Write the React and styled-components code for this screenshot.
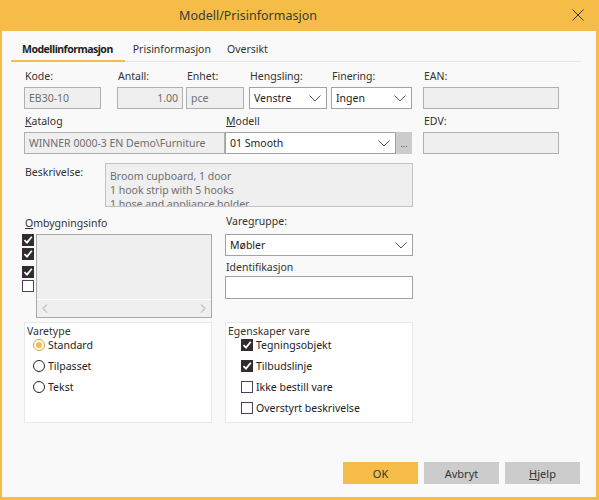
import React from 'react';
import styled, { createGlobalStyle } from 'styled-components';

const orange = '#f5bd48';

const GlobalStyle = createGlobalStyle`
  html, body {
    margin: 0;
    padding: 0;
  }
  body {
    font-family: 'Noto Sans', sans-serif;
    font-size: 10.5px;
    color: #333;
    background: #fff;
  }
  * {
    box-sizing: border-box;
  }
`;

const Window = styled.div`
  width: 599px;
  height: 500px;
  display: flex;
  flex-direction: column;
  border: 2px solid ${orange};
  border-top: 0;
  border-right-width: 3px;
  border-bottom-width: 3px;
  background: #f9f9f9;
`;

const TitleBar = styled.div`
  height: 31px;
  flex: none;
  display: flex;
  align-items: center;
  background: ${orange};
`;

const Title = styled.div`
  flex: 1;
  text-align: center;
  padding-right: 78px;
  font-size: 12.5px;
  color: #3a3a3a;
`;

const CloseButton = styled.div`
  width: 12px;
  height: 12px;
  margin: -2px 12px 0 0;
  display: flex;
`;

const Body = styled.div`
  flex: 1;
  display: flex;
  flex-direction: column;
  padding: 8px 15px 13px 9px;
`;

const TabBar = styled.div`
  display: flex;
  border-bottom: 1px solid #e6e6e6;
`;

const Tab = styled.div`
  padding: ${p => (p.$active ? '0 12px 0 11px' : '0 8px')};
  line-height: 21px;
  font-weight: ${p => (p.$active ? 700 : 400)};
  letter-spacing: ${p => (p.$active ? '-0.5px' : '0')};
  color: ${p => (p.$active ? '#222' : '#333')};
  border-bottom: 2px solid ${p => (p.$active ? orange : 'transparent')};
  margin-bottom: -1px;
`;

const Form = styled.div`
  display: flex;
  flex-direction: column;
  padding-left: 13px;
`;

const Row = styled.div`
  display: flex;
  align-items: flex-start;
  margin-top: ${p => p.$mt || 0}px;
`;

const Field = styled.div`
  width: ${p => p.$w}px;
  margin-left: ${p => p.$ml || 0}px;
  display: flex;
  flex-direction: column;
`;

const FieldLabel = styled.div`
  line-height: 14px;
  margin-bottom: ${p => (p.$mb === undefined ? 4 : p.$mb)}px;
  margin-top: ${p => p.$mt || 0}px;
  padding-left: 1px;
  white-space: nowrap;
  color: #333;
`;

const Key = styled.span`
  text-decoration: underline;
`;

const TextBox = styled.div`
  height: ${p => p.$h || 22}px;
  flex: none;
  border: 1px solid ${p => (p.$disabled ? '#b0b0b0' : '#a2a2a2')};
  background: ${p => (p.$disabled ? '#efefef' : '#fff')};
  color: ${p => (p.$disabled ? '#6e6e6e' : '#222')};
  padding: 0 4px;
  display: flex;
  align-items: center;
  justify-content: ${p => (p.$right ? 'flex-end' : 'flex-start')};
  white-space: nowrap;
  overflow: hidden;
`;

const SelectBox = styled(TextBox)`
  justify-content: space-between;
  padding-right: 5px;
  width: ${p => (p.$w ? `${p.$w}px` : 'auto')};
`;

const ComboGroup = styled.div`
  display: flex;
`;

const BrowseButton = styled.div`
  width: 16px;
  height: 22px;
  background: #cccccc;
  color: #555;
  text-align: center;
  line-height: 24px;
  font-size: 9px;
`;

const DescLabel = styled.div`
  width: 81px;
  padding: 2px 0 0 1px;
  line-height: 14px;
`;

const DescBox = styled.div`
  width: 308px;
  height: 44px;
  border: 1px solid #c2c2c2;
  background: #efefef;
  color: #6e6e6e;
  padding: 5px 4px 0;
  line-height: 14px;
  overflow: hidden;
`;

const Columns = styled.div`
  display: flex;
  gap: 13px;
  margin-top: ${p => p.$mt || 0}px;
`;

const Column = styled.div`
  width: 188px;
  display: flex;
  flex-direction: column;
`;

const InfoRow = styled.div`
  display: flex;
  gap: 2px;
  margin-left: -2px;
`;

const CheckColumn = styled.div`
  width: 12px;
  display: flex;
  flex-direction: column;
`;

const ListBox = styled.div`
  width: 176px;
  height: 84px;
  border: 1px solid #a8a8a8;
  background: #efefef;
  display: flex;
  flex-direction: column;
`;

const ListArea = styled.div`
  flex: 1;
`;

const ScrollBar = styled.div`
  height: 18px;
  border-top: 1px solid #fbfbfb;
  display: flex;
  align-items: center;
  justify-content: space-between;
  padding: 0 5px;
`;

const GroupBox = styled.div`
  width: 188px;
  height: 101px;
  background: #fff;
  border: 1px solid #e9e9e9;
  padding: 1px 2px;
`;

const GroupTitle = styled.div`
  line-height: 14px;
  color: #333;
`;

const OptionList = styled.div`
  margin-top: -4px;
  padding-left: ${p => p.$pl}px;
`;

const Option = styled.div`
  height: 21px;
  display: flex;
  align-items: center;
  gap: 3px;
  color: #222;
`;

const CheckBox = styled.div`
  width: 12px;
  height: 12px;
  flex: none;
  margin-top: ${p => p.$mt || 0}px;
  border: 1px solid ${p => (p.$checked ? '#3a2b32' : '#4e3f62')};
  background: ${p => (p.$checked ? '#2d2d2d' : '#fff')};
  display: flex;
  align-items: center;
  justify-content: center;
`;

const Radio = styled.div`
  width: 12px;
  height: 12px;
  flex: none;
  border-radius: 50%;
  border: 1px solid ${p => (p.$checked ? '#d9a53e' : '#222')};
  background: #fff;
  display: flex;
  align-items: center;
  justify-content: center;
  &::after {
    content: '';
    width: 6px;
    height: 6px;
    border-radius: 50%;
    background: ${p => (p.$checked ? orange : 'transparent')};
  }
`;

const ButtonRow = styled.div`
  margin-top: auto;
  display: flex;
  justify-content: flex-end;
  gap: 6px;
  padding-right: 1px;
`;

const Button = styled.button`
  width: 75px;
  height: 22px;
  border: 0;
  padding: 0;
  background: ${p => (p.$primary ? orange : '#cccccc')};
  font-family: inherit;
  font-size: 11px;
  color: #333;
`;

const Chevron = () => (
  <svg width="12" height="7" viewBox="0 0 12 7">
    <path d="M0.5 0.5 L6 6 L11.5 0.5" fill="none" stroke="#555" strokeWidth="1" />
  </svg>
);

const Tick = () => (
  <svg width="10" height="10" viewBox="0 0 10 10">
    <path d="M1.5 5.2 L4 7.6 L8.8 1.8" fill="none" stroke="#fff" strokeWidth="1.8" />
  </svg>
);

const Arrow = ({ dir }) => (
  <svg width="6" height="9" viewBox="0 0 6 9">
    <path
      d={dir === 'left' ? 'M5 0.5 L1 4.5 L5 8.5' : 'M1 0.5 L5 4.5 L1 8.5'}
      fill="none"
      stroke="#c6c6c6"
      strokeWidth="1.4"
    />
  </svg>
);

const Check = ({ checked, mt }) => (
  <CheckBox $checked={checked} $mt={mt}>
    {checked && <Tick />}
  </CheckBox>
);

const Select = ({ value, width }) => (
  <SelectBox $w={width}>
    <span>{value}</span>
    <Chevron />
  </SelectBox>
);

export default function App() {
  return (
    <>
      <GlobalStyle />
      <Window>
        <TitleBar>
          <Title>Modell/Prisinformasjon</Title>
          <CloseButton>
            <svg width="12" height="12" viewBox="0 0 12 12">
              <path d="M0.5 0.5 L11.5 11.5 M11.5 0.5 L0.5 11.5" stroke="#333" strokeWidth="1" />
            </svg>
          </CloseButton>
        </TitleBar>
        <Body>
          <TabBar>
            <Tab $active>Modellinformasjon</Tab>
            <Tab>Prisinformasjon</Tab>
            <Tab>Oversikt</Tab>
          </TabBar>
          <Form>
            <Row $mt={7}>
              <Field $w={77}>
                <FieldLabel>Kode:</FieldLabel>
                <TextBox $disabled>EB30-10</TextBox>
              </Field>
              <Field $w={66} $ml={16}>
                <FieldLabel>Antall:</FieldLabel>
                <TextBox $disabled $right>1.00</TextBox>
              </Field>
              <Field $w={58} $ml={3}>
                <FieldLabel>Enhet:</FieldLabel>
                <TextBox $disabled>pce</TextBox>
              </Field>
              <Field $w={78} $ml={5}>
                <FieldLabel>Hengsling:</FieldLabel>
                <Select value="Venstre" />
              </Field>
              <Field $w={81} $ml={4}>
                <FieldLabel>Finering:</FieldLabel>
                <Select value="Ingen" />
              </Field>
              <Field $w={136} $ml={11}>
                <FieldLabel>EAN:</FieldLabel>
                <TextBox $disabled />
              </Field>
            </Row>
            <Row $mt={5}>
              <Field $w={201}>
                <FieldLabel>
                  <Key>K</Key>atalog
                </FieldLabel>
                <TextBox $disabled>WINNER 0000-3 EN Demo\Furniture</TextBox>
              </Field>
              <Field $w={187}>
                <FieldLabel>
                  <Key>M</Key>odell
                </FieldLabel>
                <ComboGroup>
                  <Select value="01 Smooth" width={171} />
                  <BrowseButton>...</BrowseButton>
                </ComboGroup>
              </Field>
              <Field $w={136} $ml={11}>
                <FieldLabel>EDV:</FieldLabel>
                <TextBox $disabled />
              </Field>
            </Row>
            <Row $mt={9}>
              <DescLabel>Beskrivelse:</DescLabel>
              <DescBox>
                Broom cupboard, 1 door
                <br />
                1 hook strip with 5 hooks
                <br />
                1 hose and appliance holder
              </DescBox>
            </Row>
            <Columns $mt={9}>
              <Column>
                <FieldLabel>
                  <Key>O</Key>mbygningsinfo
                </FieldLabel>
                <InfoRow>
                  <CheckColumn>
                    <Check checked />
                    <Check checked mt={2} />
                    <Check checked mt={6} />
                    <Check mt={2} />
                  </CheckColumn>
                  <ListBox>
                    <ListArea />
                    <ScrollBar>
                      <Arrow dir="left" />
                      <Arrow dir="right" />
                    </ScrollBar>
                  </ListBox>
                </InfoRow>
              </Column>
              <Column>
                <FieldLabel $mt={-2} $mb={6}>
                  Vare<Key>g</Key>ruppe:
                </FieldLabel>
                <Select value="Møbler" />
                <FieldLabel $mt={4} $mb={2}>
                  Identifikasjon
                </FieldLabel>
                <TextBox $h={23} />
              </Column>
            </Columns>
            <Columns $mt={4}>
              <GroupBox>
                <GroupTitle>Varetype</GroupTitle>
                <OptionList $pl={6}>
                  <Option>
                    <Radio $checked />
                    Standard
                  </Option>
                  <Option>
                    <Radio />
                    Tilpasset
                  </Option>
                  <Option>
                    <Radio />
                    Tekst
                  </Option>
                </OptionList>
              </GroupBox>
              <GroupBox>
                <GroupTitle>Egenskaper vare</GroupTitle>
                <OptionList $pl={13}>
                  <Option>
                    <Check checked />
                    Tegningsobjekt
                  </Option>
                  <Option>
                    <Check checked />
                    Tilbudslinje
                  </Option>
                  <Option>
                    <Check />
                    Ikke bestill vare
                  </Option>
                  <Option>
                    <Check />
                    Overstyrt beskrivelse
                  </Option>
                </OptionList>
              </GroupBox>
            </Columns>
          </Form>
          <ButtonRow>
            <Button $primary>OK</Button>
            <Button>Avbryt</Button>
            <Button>
              <Key>H</Key>jelp
            </Button>
          </ButtonRow>
        </Body>
      </Window>
    </>
  );
}
